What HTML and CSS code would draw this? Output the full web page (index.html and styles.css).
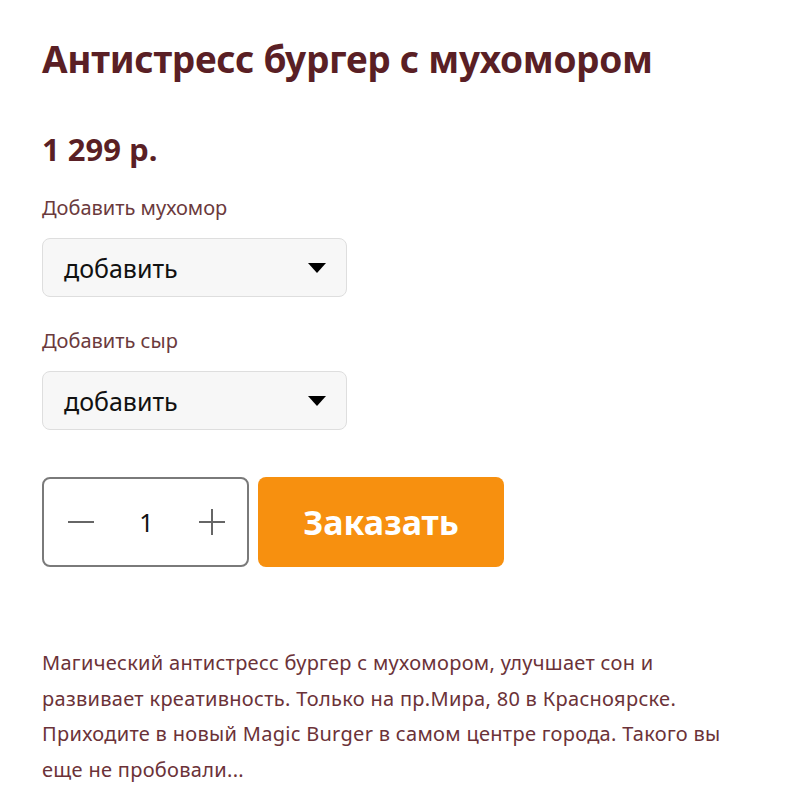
FILE: index.html
```html
<!DOCTYPE html>
<html lang="ru">

<head>
    <meta charset="UTF-8">
    <meta name="viewport" content="width=device-width, initial-scale=1.0">
    <title>Антистресс бургер с мухомором</title>
    <link rel="stylesheet" href="styles.css">
</head>

<body>
    <div class="product">
        <h1 class="product-title">Антистресс бургер с мухомором</h1>
        <div class="price">1 299 р.</div>

        <div class="option">
            <label class="option-label">Добавить мухомор</label>
            <div class="select">
                <span>добавить</span>
                <span class="arrow"></span>
            </div>
        </div>

        <div class="option">
            <label class="option-label">Добавить сыр</label>
            <div class="select">
                <span>добавить</span>
                <span class="arrow"></span>
            </div>
        </div>

        <div class="order">
            <div class="qty">
                <svg class="qty-btn" width="26" height="26" viewBox="0 0 26 26">
                    <line x1="0" y1="13" x2="26" y2="13" stroke="#666" stroke-width="2" />
                </svg>
                <span class="qty-value">1</span>
                <svg class="qty-btn" width="26" height="26" viewBox="0 0 26 26">
                    <line x1="0" y1="13" x2="26" y2="13" stroke="#666" stroke-width="2" />
                    <line x1="13" y1="0" x2="13" y2="26" stroke="#666" stroke-width="2" />
                </svg>
            </div>
            <button class="order-btn">Заказать</button>
        </div>

        <p class="description">
            Магический антистресс бургер с мухомором, улучшает сон и<br>
            развивает креативность. Только на пр.Мира, 80 в Красноярске.<br>
            Приходите в новый Magic Burger в самом центре города. Такого вы<br>
            еще не пробовали...
        </p>
    </div>
</body>

</html>
```

FILE: styles.css
```css
body {
    margin: 0;
    background-color: #ffffff;
    font-family: "Noto Sans", Arial, sans-serif;
}

.product {
    padding: 34px 0 0 42px;
}

.product-title {
    margin: 0;
    font-size: 37px;
    line-height: 50px;
    font-weight: 700;
    letter-spacing: -0.3px;
    color: #5a1f25;
}

.price {
    margin-top: 45px;
    font-size: 31px;
    line-height: 40px;
    font-weight: 700;
    color: #5a1f25;
}

.option {
    margin-top: 25px;
}

.option + .option {
    margin-top: 30px;
}

.option-label {
    display: block;
    font-size: 20px;
    line-height: 28px;
    color: #6b3a3d;
}

.select {
    display: flex;
    align-items: center;
    justify-content: space-between;
    box-sizing: border-box;
    width: 305px;
    height: 59px;
    margin-top: 16px;
    padding: 0 20px 0 21px;
    background-color: #f7f7f7;
    border: 1px solid #dedede;
    border-radius: 8px;
    font-size: 25px;
    color: #111;
}

.arrow {
    width: 0;
    height: 0;
    border-left: 9px solid transparent;
    border-right: 9px solid transparent;
    border-top: 10px solid #000;
}

.order {
    display: flex;
    gap: 9px;
    margin-top: 47px;
}

.qty {
    display: flex;
    align-items: center;
    justify-content: space-between;
    box-sizing: border-box;
    width: 207px;
    height: 90px;
    padding: 0 22px 0 24px;
    border: 2px solid #7a7a7a;
    border-radius: 8px;
}

.qty-value {
    font-size: 25px;
    color: #111;
}

.order-btn {
    width: 246px;
    height: 90px;
    border: none;
    border-radius: 8px;
    background-color: #f7900f;
    color: #fff;
    font-family: "Noto Sans", Arial, sans-serif;
    font-size: 34px;
    font-weight: 700;
}

.description {
    margin: 78px 0 0 0;
    font-size: 20px;
    line-height: 35.5px;
    letter-spacing: 0.3px;
    color: #6b3238;
}
```
